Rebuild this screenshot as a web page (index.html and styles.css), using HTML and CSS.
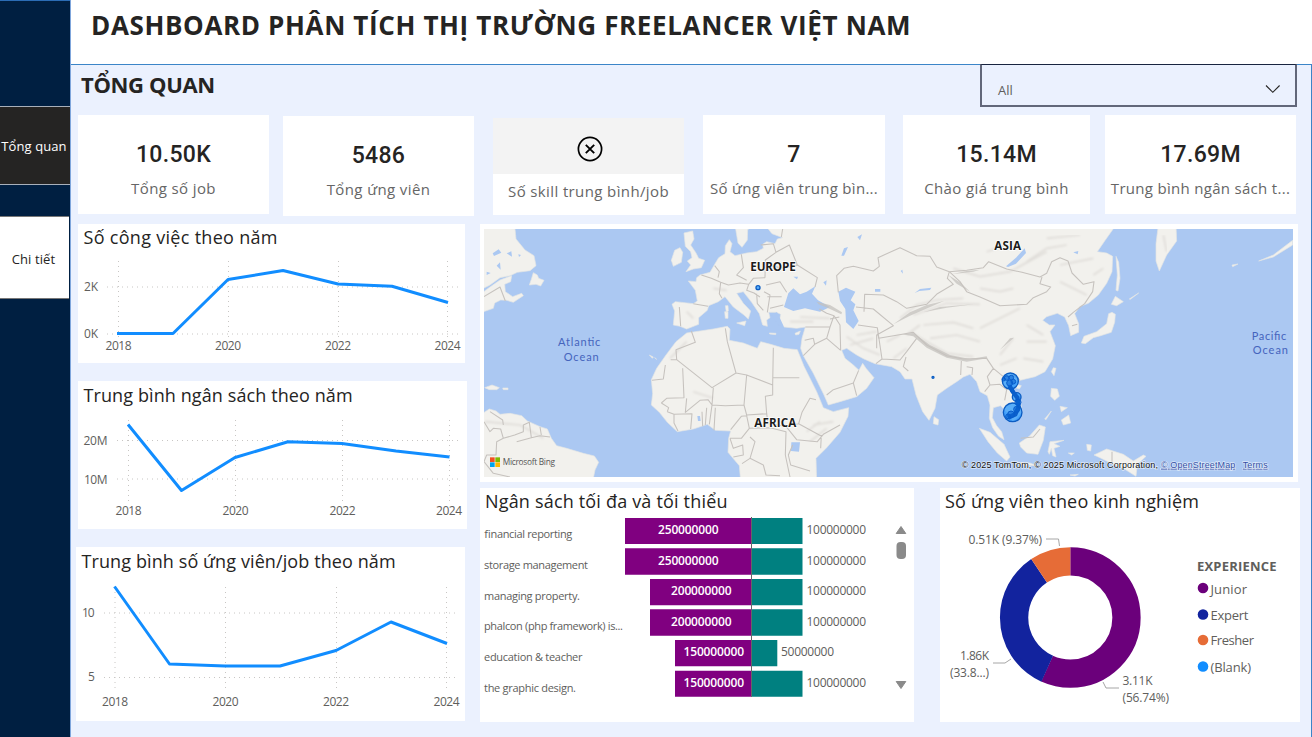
FILE: index.html
```html
<!DOCTYPE html>
<html lang="vi">
<head>
<meta charset="utf-8">
<title>Dashboard phân tích thị trường freelancer Việt Nam</title>
<link rel="stylesheet" href="styles.css">
</head>
<body>
<div class="app">
  <nav class="side">
    <a class="nav nav-on">Tổng quan</a>
    <a class="nav nav-off">Chi tiết</a>
  </nav>
  <div class="page">
    <header class="top"><h1>DASHBOARD PHÂN TÍCH THỊ TRƯỜNG FREELANCER VIỆT NAM</h1></header>
    <main class="main">
      <div class="bar">
        <h2>TỔNG QUAN</h2>
        <div class="select"><span>All</span>
          <svg width="16" height="10" viewBox="0 0 16 10"><path d="M1 1.5L7.8 8.3L14.6 1.5" fill="none" stroke="#252423" stroke-width="1.1"/></svg>
        </div>
      </div>
      <section class="kpis">
        <div class="kpi k1"><b>10.50K</b><span>Tổng số job</span></div>
        <div class="kpi k2"><b>5486</b><span>Tổng ứng viên</span></div>
        <div class="kpi k3"><div class="err"><svg width="26" height="26" viewBox="0 0 26 26" fill="none" stroke="#000"><circle cx="13" cy="13" r="11.6" stroke-width="1.7"/><path d="M8.8 8.8L17.2 17.2M17.2 8.8L8.8 17.2" stroke-width="1.9"/></svg></div><span>Số skill trung bình/job</span></div>
        <div class="kpi k4"><b>7</b><span>Số ứng viên trung bìn...</span></div>
        <div class="kpi k5"><b>15.14M</b><span>Chào giá trung bình</span></div>
        <div class="kpi k6"><b>17.69M</b><span>Trung bình ngân sách t...</span></div>
      </section>
      <section class="body">
        <div class="left">
          <article class="card c1">
            <h3>Số công việc theo năm</h3>
            <svg class="plot" viewBox="78 254 387 109" width="387" height="109">
              <path class="grid" d="M107 287H461M107 334H461M118.500 261V339M228.500 261V339M338.500 261V339M447.500 261V339"/>
              <polyline class="line" points="117,333.500 173,333.500 228,279.500 283,270.500 338,284 392,286.300 448,302.500"/>
              <g class="ax"><text x="84" y="291" textLength="14">2K</text><text x="84" y="338" textLength="14">0K</text>
              <text x="105.500" y="350" textLength="26">2018</text><text x="215" y="350" textLength="26">2020</text><text x="325" y="350" textLength="26">2022</text><text x="434.500" y="350" textLength="26">2024</text></g>
            </svg>
          </article>
          <article class="card c2">
            <h3>Trung bình ngân sách theo năm</h3>
            <svg class="plot" viewBox="78 411 389 118" width="389" height="118">
              <path class="grid" d="M117 440.500H461M117 479H461M128.500 420V501M235.500 420V501M342.500 420V501M449.500 420V501"/>
              <polyline class="line" points="128,424.500 181.500,490.500 235,457.500 288,441.800 342,443.500 396,451 449.500,457"/>
              <g class="ax"><text x="83.500" y="445" textLength="24">20M</text><text x="84" y="484" textLength="23.500">10M</text>
              <text x="115.500" y="515" textLength="26">2018</text><text x="222.500" y="515" textLength="26">2020</text><text x="329.500" y="515" textLength="26">2022</text><text x="436" y="515" textLength="26">2024</text></g>
            </svg>
          </article>
          <article class="card c3">
            <h3>Trung bình số ứng viên/job theo năm</h3>
            <svg class="plot" viewBox="76 577 389 144" width="389" height="144">
              <path class="grid" d="M104 613H455M104 677.500H455M115 587V692M225.500 587V692M336.500 587V692M446.500 587V692"/>
              <polyline class="line" points="114.500,586.500 169.500,664 225,666 280,666 336,650.500 391,622 447,643.500"/>
              <g class="ax"><text x="82" y="617" textLength="12.500">10</text><text x="88" y="681">5</text>
              <text x="102" y="706" textLength="26">2018</text><text x="212.500" y="706" textLength="26">2020</text><text x="323" y="706" textLength="26">2022</text><text x="433.500" y="706" textLength="26">2024</text></g>
            </svg>
          </article>
        </div>
        <div class="right">
          <article class="card map">
            <svg viewBox="12 12 2427 744" width="809" height="248" preserveAspectRatio="none">
              <defs><filter id="soft" x="0" y="0" width="100%" height="100%"><feGaussianBlur stdDeviation="3"/></filter></defs>
              <rect x="0" y="0" width="2460" height="780" fill="#abc8f2"/>
              <g class="land">
                <path d="M0 0L105 12 108 42 135 75 162 92 168 122 150 137 112 142 90 152 60 158 30 180 0 195Z"/>
                <path d="M0 208L30 186 60 165 95 152 92 170 74 178 76 200 98 215 125 205 130 212 100 232 80 226 62 225 44 234 40 250 0 264Z"/>
                <path d="M160 143L172 150 176 160 192 166 182 183 168 178 148 180 154 163Z"/>
                <path d="M14 488L36 480 58 488 50 494 28 494Z"/><path d="M68 489h16v5h-14z"/>
                <path d="M0 570L28 552 48 558 60 568 90 565 125 572 142 588 180 605 202 612 214 640 230 662 260 670 310 685 343 693 356 712 345 735 338 770 0 770Z"/>
                <path d="M612 24L638 18 642 42 632 60 648 84 656 100 674 106 664 128 640 132 618 140 632 120 622 108 636 98 632 80 616 64Z"/>
                <path d="M584 76L600 68 608 82 604 112 580 124 574 106Z"/>
                <path d="M765 0L822 0 803 14 802 45 786 67 774 54Z"/>
                <path d="M625 168L648 170 650 158 660 150 690 142 704 118 716 98 735 86 736 62 748 44 756 56 750 80 765 92 800 84 830 80 850 70 848 58 860 50 885 56 892 42 908 38 876 26 855 0 1908 0 1876 45 1852 80 1880 84 1898 94 1896 140 1880 175 1855 210 1825 235 1800 244 1784 266 1796 296 1796 322 1772 332 1766 302 1754 276 1732 265 1700 275 1688 286 1708 300 1725 300 1710 320 1726 362 1718 402 1695 440 1665 455 1636 462 1612 468 1584 478 1600 500 1622 532 1626 562 1600 590 1582 564 1562 542 1540 548 1537 578 1550 602 1565 620 1572 644 1556 634 1538 608 1528 580 1530 540 1522 512 1500 500 1490 470 1470 448 1450 456 1430 470 1400 490 1372 510 1365 550 1347 586 1328 560 1308 510 1296 462 1275 462 1260 440 1235 425 1185 416 1152 402 1130 390 1100 370 1085 376 1095 400 1120 420 1137 436 1148 415 1158 430 1182 458 1160 490 1130 515 1080 530 1045 540 1032 510 1000 445 970 392 962 370 966 340 976 306 950 310 912 306 898 290 902 268 890 262 866 262 870 278 860 285 862 304 848 300 838 266 815 232 790 200 770 205 790 235 812 258 805 282 792 270 760 246 735 215 715 230 686 242 682 256 656 278 656 298 620 312 600 304 580 300 584 258 576 238 586 230 640 236 652 228 646 196Z"/>
                <path d="M620 324L700 312 742 304 750 312 748 346 790 354 832 370 842 350 872 358 912 370 952 374 972 424 1010 500 1030 548 1060 560 1106 548 1104 574 1080 622 1040 668 1008 700 1010 770 782 770 778 722 744 682 746 640 752 618 706 616 682 598 640 612 592 620 562 592 538 562 514 540 518 506 514 464 530 430 558 390 588 350Z"/>
                <path d="M736 242l8 0 1 16-6 4zM734 260h10v20h-8zM770 294l28-6-4 14zM868 324l20 1-1 4-18-2zM945 325l16-7-4 10-10 2z"/>
                <path d="M1362 575L1376 584 1374 600 1360 596Z"/>
                <path d="M1498 610L1530 622 1572 658 1590 696 1580 708 1552 684 1524 650Z"/>
                <path d="M1618 654L1648 634 1678 600 1696 606 1690 646 1674 688 1640 684 1622 666Z"/>
                <path d="M1710 650l42-4-30 10 18 8-18 6 6 26-10-4-4-22-6 18-4-8zM1820 658l14 2-2 18-10-2z"/>
                <path d="M1842 690L1880 672 1930 688 1960 708 1990 690 1998 694 1972 718 1968 754 1930 730 1896 716 1860 698Z"/>
                <path d="M1600 712l50 2 20 8-40-2zM1765 684l18 0-8 6zM1770 750l25-2-10 5z"/>
                <path d="M1714 490L1732 492 1738 514 1724 526 1712 514ZM1740 544l22 4-18 12zM1744 585L1766 570 1772 594 1750 600ZM1694 582L1714 558 1698 584Z"/>
                <path d="M1720 428L1728 430 1722 452 1714 440ZM1610 478l14 4-6 10-12-4Z"/>
                <path d="M1908 94L1916 112 1920 160 1914 198 1908 196 1912 150Z"/>
                <path d="M1906 214L1930 230 1910 242 1894 238ZM1948 222l28-18-25 19z"/>
                <path d="M1896 262L1906 268 1904 292 1894 322 1862 332 1840 338 1816 356 1804 354 1812 334 1850 320 1880 296 1886 266Z"/>
                <path d="M2035 0L2088 0 2090 48 2060 90 2038 138 2028 108 2028 56Z"/>
                <path d="M2336 108L2380 90 2438 46 2438 60 2380 96ZM2256 120l18-3-16 8z"/>
                <path d="M508 390l12 6-3 4zM524 398l6 5z"/>
              </g>
              <g fill="#abc8f2">
                <path d="M925 205L940 190 960 208 980 200 1006 184 996 206 1014 226 1050 246 1020 260 975 250 940 258 912 246Z"/>
                <path d="M1075 200L1098 188 1126 200 1112 226 1126 238 1120 256 1136 288 1120 312 1098 292 1096 252 1080 228Z"/>
                <path d="M1304 204L1320 192 1354 188 1350 195 1318 198ZM1185 192h16v8h-16zM1262 138l5-4 2 12zM1084 92L1092 70 1104 66 1092 92ZM1132 36l14-8-6 18zM1030 172l10-6-2 16zM940 155l14 0-3 8z"/>
                <path d="M1578 124L1608 98 1634 70 1638 84 1608 116 1584 126Z"/><path d="M934 652l26 0-3 28-24-2zM1780 82l15-4-2 10z"/>
                <path d="M38 85l18-12 8 10-22 10zM80 85l14-6 2 16zM50 122l10-10 2 22zM20 140l12 4-12 6zM115 88l8 2-6 6z"/>
                <path d="M912 306L895 300 875 270 890 262 900 280ZM652 573l8 0 2 15-8 0z"/>
              </g>
              <g class="relief" filter="url(#soft)">
                <path d="M1260 280L1310 240 1370 225 1450 220M1290 320L1340 350 1400 385 1480 395M1300 270L1400 235 1500 238M1280 330L1320 300M1100 335L1150 370 1200 390M960 276L1050 280M1500 310L1620 250M1560 390L1600 340M1420 130L1500 155 1590 140 1700 80M1240 400L1280 370M1740 170L1820 210M1020 590L980 620M15 590L120 600 190 640M620 350L570 400"/>
                <path d="M1330 300L1420 292 1480 310M1350 340L1430 330 1500 350M1500 190L1560 200 1600 190M1640 300L1690 330M1640 350L1700 350M1630 400L1690 410M1560 420L1610 400M1640 110L1700 70 1760 60M1700 40L1800 30M1520 80L1580 60M1740 120L1840 100M1840 150L1870 130M1110 360L1180 340M1130 330L1190 320M1000 600L1060 590M990 650L1040 610M2050 30L2060 80M930 290L1000 290M700 190L740 196M640 500L700 520M1220 350L1260 330M620 260L640 280"/>
              </g>
              <g class="ridge">
                <path d="M1010 230L1050 240 1086 262 1084 268 1050 252 1016 238ZM1240 298L1290 262 1340 240 1392 228 1290 272ZM1266 328L1300 324 1350 360 1410 390 1470 402 1520 394 1522 400 1460 410 1400 398 1340 368 1300 334ZM1405 150L1440 172 1470 200 1430 176ZM1415 148L1460 138 1500 134 1480 140ZM1330 262L1380 246 1480 238 1400 248ZM1560 374L1590 340 1602 338Z"/>
              </g>
              <g class="border">
                <path d="M12 215L60 186 76 228M12 590L30 620 40 610 62 612 70 640 50 650 48 690 20 690 12 710 40 745 90 756M70 600L68 585 30 560M70 640L104 630 130 620 130 600 148 592 154 638 180 632 210 636M180 606L184 630M154 638L110 650"/>
                <path d="M598 246L602 304M640 236L684 244M664 150L694 160 722 172 718 206 726 220M704 122L718 140 714 158M722 172L745 180 780 174 806 178 820 160 855 158M784 88L790 128 770 150 800 166M806 178L800 196 822 204 840 216M830 206L832 236 850 256M852 200L870 210 862 262M855 158L856 105 888 82 880 56 842 60M888 82L928 60 952 120 912 130 858 120M952 120L1012 158 1005 186M858 180L900 170 920 202M862 215H905M870 250L910 240M904 36L908 12"/>
                <path d="M1075 202L1070 152 1092 130 1120 124 1180 138 1198 124 1194 98 1260 68 1310 92 1350 94 1370 126 1408 140 1402 160 1420 178 1372 206 1340 238 1280 250 1250 230 1210 210 1154 208 1152 260M1128 246L1180 252 1240 302 1190 330 1190 370M1134 300L1192 308 1196 340 1254 330 1300 322M1192 308L1206 402 1188 416M1206 402L1260 405 1280 380 1310 340M1278 396L1270 425 1285 438M1300 322L1340 360 1400 392 1450 402 1520 400M1444 408L1442 450M1460 425L1478 428 1476 450M1520 400L1540 430 1522 455 1530 480 1514 500M1540 430L1570 455 1600 450 1620 466M1530 480L1560 478 1580 494 1574 526"/>
                <path d="M1408 140L1460 136 1510 128 1526 110 1580 132 1626 142 1680 156 1700 145 1715 110 1740 98 1764 108 1776 144 1810 178 1842 170 1838 200 1814 236 1780 262M1408 140L1440 170 1460 200 1500 216 1560 242 1640 238 1660 218 1700 200 1712 186 1680 176 1686 156M1780 262L1764 276M1776 302L1792 298"/>
                <path d="M976 306L1050 306 1040 340 1004 358 970 392M1040 340L1082 376M1050 306L1062 272 1040 265 1018 252M1062 272L1080 300 1082 376M1004 358L1000 340 974 346M1136 436L1120 474 1060 494 1040 510M1120 474L1130 512M1050 282L1078 276"/>
                <path d="M634 318L646 352 588 374 590 404 572 404M590 404L696 488 768 444 742 350 736 310M608 430L612 518 560 520 544 534M556 420L550 462 516 466M768 444L800 450 792 540 736 542 696 540 700 488M800 450L878 480 880 368M878 458H958M878 480V510L856 514 860 566 800 570 792 540M860 566L864 596 918 604 956 596 966 562 990 520 1008 524M696 540L684 524 660 526 616 562 620 520M696 540L688 598M544 534L566 548 562 560M582 566V594L594 618M562 560L582 568 636 566 632 612M666 560L668 604M680 548L676 600M702 616L706 548M752 614L784 574 800 572 808 610 784 640 750 640M808 610L870 608 918 620 916 690 930 756M918 604L950 644 1012 650 1030 628 1080 600M956 596L1022 632M1024 630L1022 670M938 660L925 690 932 720 990 738M750 640L760 670 788 660 790 690 760 696M810 636L825 650 810 700 786 716M810 700L850 720 858 750 900 752M1622 640L1660 636 1680 612M1896 680V716"/>
              </g>
              <g class="pins" fill="#118dff" fill-opacity=".68" stroke="#0b5cc2" stroke-width="4">
                <circle cx="834" cy="188" r="6"/><circle cx="1359" cy="457" r="3"/>
                <circle cx="1591" cy="468" r="24"/><circle cx="1598" cy="562" r="28"/><circle cx="1610" cy="516" r="13"/>
                <path d="M1588 482L1598 500 1612 518 1616 545 1606 568 1584 578" fill="none" stroke="#0a5fcb" stroke-width="13"/>
                <g fill="#0a62d0" fill-opacity=".6" stroke="#075ccb" stroke-width="3"><circle cx="1580" cy="459" r="7"/><circle cx="1594" cy="458" r="7"/><circle cx="1600" cy="470" r="7"/><circle cx="1589" cy="474" r="9"/><circle cx="1571" cy="463" r="5"/><circle cx="1597" cy="497" r="5"/><circle cx="1614" cy="532" r="9"/><circle cx="1593" cy="568" r="10"/><circle cx="1610" cy="553" r="9"/><circle cx="1584" cy="574" r="7"/></g>
              </g>
              <g class="region"><text x="811" y="137" textLength="136">EUROPE</text><text x="1543" y="74" textLength="80">ASIA</text><text x="823" y="605" textLength="126">AFRICA</text></g>
              <g class="ocean"><text x="234" y="364" textLength="127">Atlantic</text><text x="251" y="407" textLength="105">Ocean</text><text x="2315" y="346" textLength="104">Pacific</text><text x="2318" y="387" textLength="106">Ocean</text></g>
              <path fill="#f25022" d="M30 697h14v14h-14z"/><path fill="#7fba00" d="M46 697h14v14h-14z"/><path fill="#00a4ef" d="M30 712h14v14h-14z"/><path fill="#ffb900" d="M46 712h14v14h-14z"/>
              <text class="bing" x="68" y="720" textLength="157">Microsoft Bing</text>
              <g class="legal"><text x="1445" y="728" textLength="589">© 2025 TomTom, © 2025 Microsoft Corporation,</text><text class="link" x="2043" y="728" textLength="223">© OpenStreetMap</text><text class="link" x="2288" y="728" textLength="75">Terms</text></g>
            </svg>
          </article>
          <div class="bottom">
            <article class="card bars">
              <h3>Ngân sách tối đa và tối thiểu</h3>
              <svg class="plot" viewBox="480 517 434 205" width="434" height="205">
                <g fill="#800080"><path d="M625 518h126v26H625zM625 548.300h126v26.400H625zM650 579h101v26.300H650zM650 609.300h101v26.400H650zM675 640h76v26.300H675zM675 670.800h76v26H675z"/></g>
                <g fill="#008080"><path d="M751.500 518h51v26h-51zM751.500 548.300h51v26.400h-51zM751.500 579h51v26.300h-51zM751.500 609.300h51v26.400h-51zM751.500 640h25.800v26.300h-25.800zM751.500 670.800h51v26h-51z"/></g>
                <path d="M751.500 517V697" stroke="#666" stroke-width="1"/>
                <g class="cat"><text x="484" y="538" textLength="88">financial reporting</text><text x="484" y="569" textLength="104">storage management</text><text x="484" y="600" textLength="96">managing property.</text><text x="484" y="630" textLength="139">phalcon (php framework) is...</text><text x="484" y="661" textLength="98.500">education &amp; teacher</text><text x="484" y="692" textLength="92">the graphic design.</text></g>
                <g class="vin"><text x="658" y="534" textLength="60.500">250000000</text><text x="658" y="565" textLength="60.500">250000000</text><text x="671" y="595" textLength="60.500">200000000</text><text x="671" y="626" textLength="60.500">200000000</text><text x="683.500" y="656" textLength="60.500">150000000</text><text x="683.500" y="687" textLength="60.500">150000000</text></g>
                <g class="ax"><text x="806.500" y="534" textLength="59.500">100000000</text><text x="806.500" y="565" textLength="59.500">100000000</text><text x="806.500" y="595" textLength="59.500">100000000</text><text x="806.500" y="626" textLength="59.500">100000000</text><text x="781" y="656" textLength="53">50000000</text><text x="806.500" y="687" textLength="59.500">100000000</text></g>
                <path d="M901 526.500L905.800 533.500H896.200ZM896.200 681.500H905.800L901 688.500Z" fill="#8a8a8a" stroke="#8a8a8a" stroke-linejoin="round"/>
                <rect x="896.500" y="542" width="9.500" height="17" rx="4" fill="#8a8a8a"/>
              </svg>
            </article>
            <article class="card donut">
              <h3>Số ứng viên theo kinh nghiệm</h3>
              <svg class="plot" viewBox="940 517 360 205" width="360" height="205">
                <g fill="none" stroke-width="28.300" transform="rotate(-90 1070.300 617.500)">
                  <circle cx="1070.300" cy="617.500" r="56.200" pathLength="100" stroke="#6b007b" stroke-dasharray="56.800 43.200"/>
                  <circle cx="1070.300" cy="617.500" r="56.200" pathLength="100" stroke="#12239e" stroke-dasharray="33.890 66.110" stroke-dashoffset="-56.740"/>
                  <circle cx="1070.300" cy="617.500" r="56.200" pathLength="100" stroke="#e66c37" stroke-dasharray="9.370 90.630" stroke-dashoffset="-90.630"/>
                </g>
                <path d="M1046 539H1058.500L1059.500 546M993 663H1005L1011 659M1103 682L1106 688H1119" fill="none" stroke="#a6a6a6"/>
                <g class="ax"><text x="968.500" y="544" textLength="73.500">0.51K (9.37%)</text><text x="960" y="660" textLength="29">1.86K</text><text x="950" y="677" textLength="39">(33.8...)</text><text x="1122.500" y="685" textLength="30">3.11K</text><text x="1122.500" y="702" textLength="46.500">(56.74%)</text></g>
                <g class="leg"><text class="cap" x="1197" y="571" textLength="79.500">EXPERIENCE</text><text x="1210.500" y="594" textLength="36.500">Junior</text><text x="1210.500" y="620" textLength="38">Expert</text><text x="1210.500" y="645" textLength="43.500">Fresher</text><text x="1210.500" y="672" textLength="40.500">(Blank)</text></g>
                <circle cx="1203" cy="588" r="5.300" fill="#6b007b"/><circle cx="1203" cy="614.500" r="5.300" fill="#12239e"/><circle cx="1203" cy="640" r="5.300" fill="#e66c37"/><circle cx="1203" cy="666.500" r="5.300" fill="#118dff"/>
              </svg>
            </article>
          </div>
        </div>
      </section>
    </main>
  </div>
</div>
</body>
</html>
```
FILE: styles.css
```css
* { box-sizing: border-box; margin: 0; padding: 0; }
body { width: 1312px; height: 737px; overflow: hidden; font-family: "Open Sans", "Noto Sans", sans-serif; color: #252423; }
svg { display: block; }
.app { display: flex; width: 1312px; height: 737px; }
.side { width: 70px; background: #001f41; border-top: 1px solid #2b6cb5; padding-top: 105px; }
.nav { display: flex; align-items: center; justify-content: center; white-space: nowrap; font-size: 13px; }
.nav-on { height: 79px; background: #252423; color: #fff; border-top: 1px solid #a9b0ba; border-bottom: 1px solid #a9b0ba; padding-right: 2px; letter-spacing: .1px; }
.nav-off { height: 83px; width: 69px; margin-top: 31px; background: #fff; border-top: 1px solid #777; border-bottom: 1px solid #777; padding: 2px 2px 0 0; letter-spacing: .1px; }
.page { width: 1242px; border-left: 1px solid #7fa6dc; }
.top { height: 65px; background: #fff; border-bottom: 1px solid #3b85c8; padding: 5px 0 0 20px; }
h1 { font-size: 26px; line-height: 40px; font-weight: 700; white-space: nowrap; letter-spacing: .64px; }
.main { height: 672px; background: #ebf1fe; border-right: 1px solid #3b85c8; padding-left: 7px; }
.bar { display: flex; justify-content: space-between; height: 50px; padding: 0 14px 0 3px; }
h2 { font-size: 22px; line-height: 39px; font-weight: 700; letter-spacing: -.35px; }
.select { width: 317px; height: 43px; margin-top: -1px; border: 2px solid #62677a; border-top: 1px solid #18243f; display: flex; align-items: center; justify-content: space-between; padding: 10px 14px 0 16px; font-size: 13px; color: #605e5c; }
.select svg { margin-top: -3px; }
.kpis { display: flex; height: 109px; align-items: flex-start; }
.kpi { height: 99px; background: #fff; display: flex; flex-direction: column; align-items: center; white-space: nowrap; color: #666; }
.kpi b { font: 500 23px/28px Roboto, sans-serif; letter-spacing: .3px; color: #252423; margin-top: 26px; }
.kpi span { font-size: 15px; line-height: 20px; margin-top: 9px; letter-spacing: .38px; }
.k1 { width: 191px; }
.k2 { width: 191px; height: 100px; margin: 1px 0 0 14px; }
.k3 { width: 191px; height: 97px; margin: 3px 0 0 19px; }
.k4 { width: 182px; margin-left: 19px; }
.k5 { width: 187px; margin-left: 18px; }
.k6 { width: 191px; margin-left: 15px; }
.err { width: 191px; height: 56px; background: #f3f3f3; display: flex; justify-content: center; padding: 18px 0 0 2px; }
.kpi.k3 span { margin-top: 7px; }
.kpi.k4 span, .kpi.k6 span { letter-spacing: .3px; }
.body { display: flex; }
.left { width: 402px; }
.card { background: #fff; }
.c1 { width: 387px; height: 139px; }
.c2 { width: 389px; height: 148px; margin-top: 18px; }
.c3 { width: 389px; height: 174px; margin: 18px 0 0 -2px; }
h3 { font-size: 18px; line-height: 24px; font-weight: 400; white-space: nowrap; padding: 2px 0 4px 5.5px; height: 30px; letter-spacing: .1px; }
.c1 h3 { padding-top: 1px; letter-spacing: .3px; }
.map { width: 818px; height: 258px; padding: 5px 4px; }
.bottom { display: flex; gap: 26px; margin-top: 6px; }
.bars { width: 434px; height: 234px; }
.donut { width: 360px; height: 234px; }
.bottom h3 { height: 29px; padding: 1px 0 0 5px; letter-spacing: .18px; }
.grid { fill: none; stroke: #c8c6c4; stroke-width: 1; stroke-dasharray: 1 4; }
.line { fill: none; stroke: #118dff; stroke-width: 3; stroke-linejoin: round; }
.ax text { font-size: 12px; fill: #605e5c; }
.cat text { font-size: 11px; fill: #605e5c; }
.vin text { font-size: 12px; font-weight: 600; fill: #fff; }
.leg text { font-size: 13px; fill: #605e5c; }
.leg .cap { font-weight: 700; }
.land path { fill: #f2f1ed; stroke: #e4e6e4; stroke-width: 2; stroke-linejoin: round; }
.relief { fill: none; stroke: #dfdcd8; stroke-width: 5; }
.border { fill: none; stroke: #c6c2be; stroke-width: 3.2; stroke-linejoin: round; }
.ridge { fill: #c4c2bd; opacity: .75; }
.region text { font-size: 35px; font-weight: 700; fill: #1c1c1c; stroke: #fff; stroke-width: 4; paint-order: stroke; }
.ocean text { font-family: Lato, sans-serif; font-size: 33px; fill: #4564bd; }
.bing { font-size: 25px; fill: #555; }
.legal text { font: 27px "Liberation Sans", sans-serif; fill: #111; stroke: #fff; stroke-width: 4; stroke-opacity: .6; paint-order: stroke; }
.legal .link { fill: #3450a5; text-decoration: underline; }
```
